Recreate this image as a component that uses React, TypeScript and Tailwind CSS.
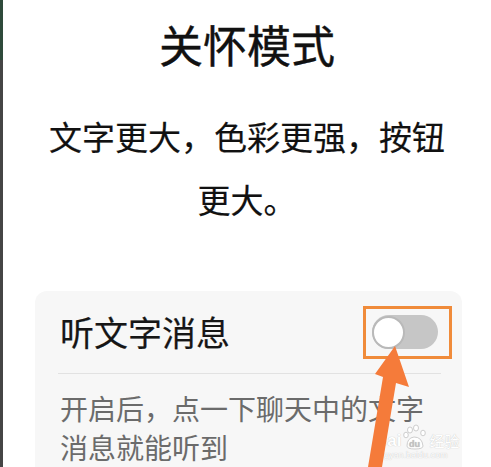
import React from "react";

const font = { fontFamily: '"Noto Sans CJK SC", "Noto Sans", sans-serif' };

function Toggle() {
  return (
    <div className="relative">
      <div className="w-[66px] h-[34px] rounded-full bg-[#c6c6c6] flex items-center">
        <div className="w-[33px] h-[33px] rounded-full bg-white border-2 border-[#b9b9b9]" />
      </div>
      {/* annotation box */}
      <div className="absolute left-[-9px] top-[-9px] w-[89px] h-[53px] border-[3px] border-[#f08b3a]" />
    </div>
  );
}

function Watermark() {
  return (
    <div className="absolute left-[375px] top-[424px] flex flex-col items-start pointer-events-none">
      <div className="flex items-end gap-[2px] text-white [text-shadow:0_0_1px_#b5b5b5]">
        <span className="text-[17px] font-bold leading-[18px]" style={{ fontFamily: '"Liberation Sans", sans-serif' }}>
          Bai
        </span>
        <svg width="24" height="26" viewBox="0 0 24 26">
          <g fill="white" stroke="#c2c2c2" strokeWidth="0.8">
            <ellipse cx="7" cy="6" rx="2.5" ry="3" />
            <ellipse cx="13" cy="4" rx="2.5" ry="3" />
            <ellipse cx="3" cy="11" rx="2.3" ry="2.8" />
            <ellipse cx="20" cy="9" rx="2.3" ry="2.8" />
            <path d="M4 22 Q4 14 11 13 Q19 13 20 22 Q20 25 12 25 Q4 25 4 22 Z" />
          </g>
          <text x="6" y="23" fontSize="9" fill="#c2c2c2" fontFamily="Liberation Sans" fontWeight="bold">du</text>
        </svg>
        <span className="text-[15px] leading-[18px]" style={font}>经验</span>
      </div>
      <span className="text-[9px] leading-[10px] text-white [text-shadow:0_0_1px_#b5b5b5]" style={{ fontFamily: '"Liberation Sans", sans-serif' }}>
        jingyan.baidu.com
      </span>
    </div>
  );
}

export default function App() {
  return (
    <div className="relative w-[491px] h-[467px] overflow-hidden bg-white flex" style={font}>
      <div className="w-[3px] shrink-0 flex flex-col bg-[#454545]">
        <div className="h-[60px] bg-[#2f4a3b]" />
      </div>

      <div className="flex-1 flex flex-col">
        <h1 className="mt-[22px] text-center text-[44px] leading-[44px] font-normal text-[#111] [-webkit-text-stroke:0.4px_#111]">
          关怀模式
        </h1>
        <p className="mt-[39px] mx-auto w-[410px] text-center text-[33px] leading-[63px] text-[#111] [-webkit-text-stroke:0.2px_#111]">
          文字更大，色彩更强，按钮更大。
        </p>

        <div className="mt-[60px] ml-[32px] mr-[29px] flex-1 rounded-t-[12px] bg-[#f7f7f7] flex flex-col">
          <div className="h-[82px] pl-[25px] pr-[24px] flex items-center justify-between">
            <span className="text-[34px] leading-[40px] text-[#161616] [-webkit-text-stroke:0.2px_#161616]">听文字消息</span>
            <Toggle />
          </div>
          <div className="ml-[23px] mr-[21px] h-px bg-[#e2e2e2]" />
          <p className="pt-[15px] pl-[25px] pr-[26px] text-[28px] leading-[39px] text-[#6b6b6b]">
            开启后，点一下聊天中的文字消息就能听到
          </p>
        </div>
      </div>

      <Watermark />

      <svg className="absolute left-0 top-0 pointer-events-none" width="491" height="467" viewBox="0 0 491 467">
        <polygon
          points="395,346 409,387 396,383 382,467 368,467 383,377 375,374"
          fill="#f57b3a"
        />
      </svg>
    </div>
  );
}
